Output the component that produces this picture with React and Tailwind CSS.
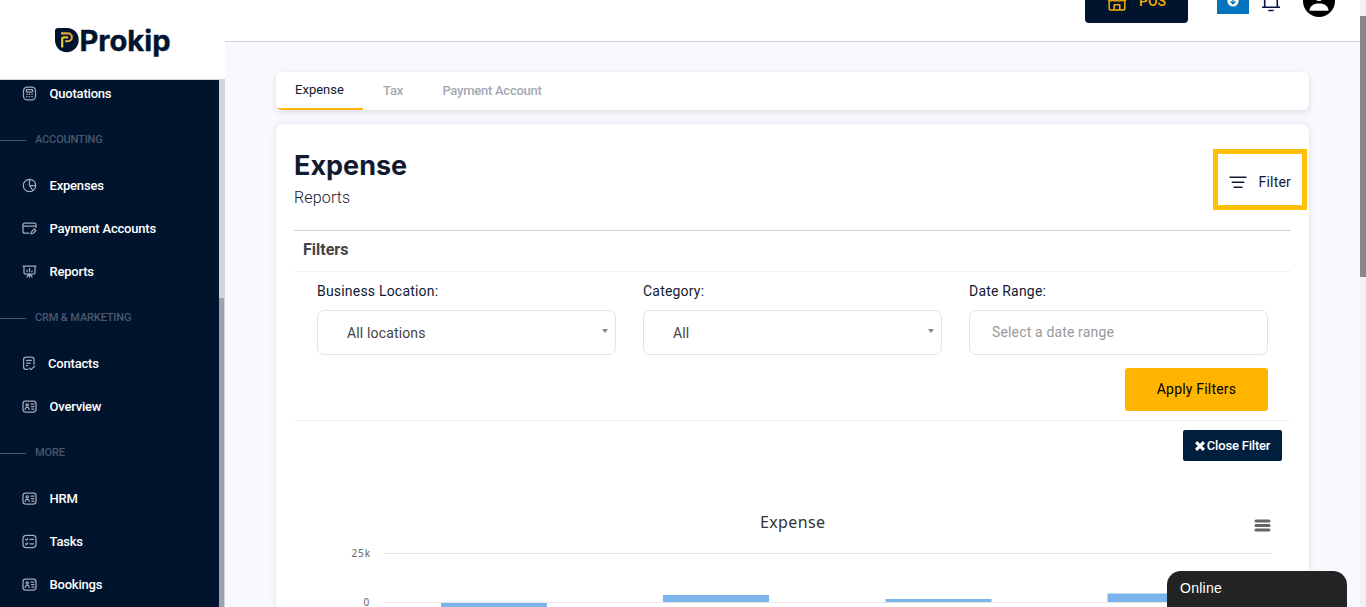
import { useState } from 'react';

const NavIcon = ({ name }) => (
  <svg
    className="h-[15px] w-[15px] shrink-0 text-[#a3a9b6]"
    viewBox="0 0 15 15"
    fill="none"
    stroke="currentColor"
    strokeWidth="1.25"
    strokeLinecap="round"
    strokeLinejoin="round"
  >
    {name === 'calculator' && (
      <>
        <rect x="1.5" y="1.2" width="12" height="12.6" rx="3.6" />
        <rect x="4.3" y="3.6" width="6.4" height="2.4" rx="0.8" />
        <path d="M4.8 8.3h.2M7.4 8.3h.2M10 8.3h.2M4.8 10.8h.2M7.4 10.8h.2M10 10.8h.2" strokeWidth="1.4" />
      </>
    )}
    {name === 'pie' && (
      <>
        <circle cx="7.5" cy="7.5" r="6.2" />
        <path d="M7.5 1.3v6.2h6.2M7.5 7.5l3.4 5" />
      </>
    )}
    {name === 'card' && (
      <>
        <path d="M6.8 12.2H2.4a1.4 1.4 0 0 1-1.4-1.4V3.6a1.4 1.4 0 0 1 1.4-1.4h10.2A1.4 1.4 0 0 1 14 3.6v2.8M1 5.2h13" />
        <path d="M9 12.9l.4-2 2.9-2.9 1.6 1.6-2.9 2.9z" />
      </>
    )}
    {name === 'board' && (
      <>
        <path d="M1 2h13M2 2v6.6a1.4 1.4 0 0 0 1.4 1.4h8.2A1.4 1.4 0 0 0 13 8.6V2" />
        <path d="M5 6v1.8M7.5 4.3v3.5M10 6.8v1M5 13l1.6-2.6M7.5 10.2V13M10 13l-1.6-2.6" />
      </>
    )}
    {name === 'note' && (
      <>
        <path d="M5.8 13.4H4a2.4 2.4 0 0 1-2.4-2.4V3.6A2.4 2.4 0 0 1 4 1.2h5.6A2.4 2.4 0 0 1 12 3.6v4.6" />
        <path d="M4.4 4.4h5M4.4 7h4M4.4 9.6h1.4M7.4 12.2l1.5 1.4 3.7-3.4" />
      </>
    )}
    {name === 'id' && (
      <>
        <rect x="1" y="2" width="13" height="11" rx="2.4" />
        <circle cx="5.2" cy="6" r="1.2" />
        <path d="M3.2 10.3c.2-1.4.9-2.1 2-2.1s1.8.7 2 2.1M9 5h3M9.4 7.5H12M9.8 10H12" />
      </>
    )}
    {name === 'tasks' && (
      <>
        <rect x="1" y="1.4" width="13" height="12.2" rx="3.4" />
        <path d="M3.6 5.4l.8.7 1.4-1.5M3.6 9.8l.8.7 1.4-1.5M8 5.4h3.4M8 9.8h3.4" />
      </>
    )}
  </svg>
);

const NavItem = ({ icon, label }) => (
  <a href="#" className="flex h-[43px] items-center pl-[22px] text-[13px] font-medium tracking-[-0.2px] text-white">
    <NavIcon name={icon} />
    <span className={label === 'Contacts' ? 'ml-[11px]' : 'ml-[12.5px]'}>{label}</span>
  </a>
);

const NavSection = ({ label }) => (
  <div className="flex h-[49px] items-center pt-px text-[11px] font-medium tracking-[-0.15px] text-[#4a586d]">
    <span className="h-px w-[26px] bg-[#4a586d]" />
    <span className="ml-[9px]">{label}</span>
  </div>
);

const Logo = () => (
  <svg width="118" height="34" viewBox="0 0 118 34">
    <defs>
      <linearGradient id="gold" gradientUnits="userSpaceOnUse" x1="7" y1="20" x2="19" y2="8">
        <stop offset="0" stopColor="#f5e13a" />
        <stop offset="1" stopColor="#dc8b2e" />
      </linearGradient>
    </defs>
    <path d="M4 3h9C20 3 24.700 8.300 24.700 15S19.500 27.200 12.700 27.200 1 22 1 15V6a3 3 0 0 1 3-3z" fill="#00142e" />
    <path
      d="M7 8.400h7a3.900 3.900 0 0 1 0 7.800h-2.800M8.200 22.500v-8.300a1.800 1.800 0 0 1 1.800-1.800h4.200"
      fill="none"
      stroke="url(#gold)"
      strokeWidth="2.1"
    />
    <text
      x="25.500"
      y="26"
      textLength="91"
      lengthAdjust="spacingAndGlyphs"
      fill="#00142e"
      stroke="#00142e"
      strokeWidth="0.4"
      className="font-['Inter',sans-serif] text-[28px] font-bold"
    >
      Prokip
    </text>
  </svg>
);

const Sidebar = () => (
  <aside className="flex w-[225px] shrink-0 flex-col bg-white">
    <div className="h-[80px] shrink-0 border-b border-[#d0d2d6] pt-[25px] pl-[54px]">
      <Logo />
    </div>
    <div className="flex min-h-0 flex-1">
      <nav className="w-[219px] overflow-hidden bg-[#00142e]">
        <div className="-mt-2">
          <NavItem icon="calculator" label="Quotations" />
          <NavSection label="ACCOUNTING" />
          <NavItem icon="pie" label="Expenses" />
          <NavItem icon="card" label="Payment Accounts" />
          <NavItem icon="board" label="Reports" />
          <NavSection label="CRM & MARKETING" />
          <NavItem icon="note" label="Contacts" />
          <NavItem icon="id" label="Overview" />
          <NavSection label="MORE" />
          <NavItem icon="id" label="HRM" />
          <NavItem icon="tasks" label="Tasks" />
          <NavItem icon="id" label="Bookings" />
        </div>
      </nav>
      <div className="w-[6px] bg-[#d1d5db] pt-[218px]">
        <div className="h-full w-[5px] bg-[#9ca3af]" />
      </div>
    </div>
  </aside>
);

const Header = () => (
  <header className="flex h-[42px] shrink-0 items-start justify-end overflow-hidden border-b border-[#cfd0d8] bg-white pr-[25px]">
    <button className="-mt-[20px] flex h-[43px] w-[103px] items-center rounded-[4px] bg-[#00142e] pl-[22px] text-[14px] font-medium text-[#f5ae06]">
      <svg width="20" height="20" viewBox="0 0 20 20" fill="none" stroke="currentColor" strokeWidth="1.5" strokeLinejoin="round">
        <path d="M2 3h16l1 4c0 2.6-4 2.6-4.5.2C14 9.600 10 9.600 10 7.200 10 9.600 6 9.600 5.500 7.200 5 9.600 1 9.600 1 7zM2.200 9.500v7.500a1 1 0 0 0 1 1h13.600a1 1 0 0 0 1-1V9.500M7.200 18v-5.200h5.600V18" />
      </svg>
      <span className="ml-3">POS</span>
    </button>
    <div className="ml-[29px] -mt-[18px] flex h-[32px] w-[32px] items-center justify-center bg-[#0474bc] text-[#0474bc]">
      <svg className="mt-[6px]" width="12" height="14" viewBox="0 0 12 14">
        <circle cx="6" cy="7" r="5.6" fill="#fff" />
        <path d="M6 3.500v6M3.500 7.200L6 9.800l2.500-2.600" fill="none" stroke="currentColor" strokeWidth="1.3" />
      </svg>
    </div>
    <svg className="ml-[12px] -mt-[12px]" width="20" height="24" viewBox="0 0 20 24" fill="none" stroke="#0b1145" strokeWidth="1.6">
      <path d="M1 19.200h18M3.700 19V9.500a6.300 6.300 0 0 1 12.600 0V19M7.300 22.500h5.400" />
    </svg>
    <svg className="ml-[22px] -mt-[15px]" width="32" height="32" viewBox="0 0 32 32">
      <circle cx="16" cy="16" r="16" fill="#000" />
      <circle cx="16" cy="11" r="5" fill="#fff" />
      <path d="M6.500 25.800c0-4.600 3.800-7.300 9.500-7.300s9.500 2.700 9.500 7.300z" fill="#fff" />
    </svg>
  </header>
);

const Tabs = () => {
  const [active, setActive] = useState('Expense');
  const tabs = [
    { name: 'Expense', width: 'w-[87px]' },
    { name: 'Tax', width: 'w-[60px]' },
    { name: 'Payment Account', width: 'w-[138px]' },
  ];

  return (
    <div className="flex h-[38px] shrink-0 overflow-hidden rounded-[6px] bg-white shadow-[0_2px_6px_rgba(20,20,60,0.12)]">
      {tabs.map((tab) => (
        <button
          key={tab.name}
          onClick={() => setActive(tab.name)}
          className={`${tab.width} text-[13px] ${
            active === tab.name
              ? 'border-b-2 border-[#ffb400] text-[#111a30]'
              : 'font-medium tracking-[-0.25px] text-[#a3a9b4]'
          }`}
        >
          {tab.name}
        </button>
      ))}
    </div>
  );
};

const Field = ({ label, value, placeholder }) => (
  <div className="w-[299px]">
    <label className="block h-[21px] text-[14px] leading-[21px] tracking-[0.2px] text-[#111a30]">{label}</label>
    <div className="mt-[8px] flex h-[45px] items-center justify-between rounded-[7px] border border-[#e4e4e8] pr-[7px] text-[14px] tracking-[0.15px]">
      {value ? (
        <>
          <span className="pt-[2px] pl-[29px] text-[#444]">{value}</span>
          <span className="-mt-[3px] border-x-[3.5px] border-t-[4.5px] border-x-transparent border-t-[#888]" />
        </>
      ) : (
        <span className="pl-[22px] text-[#999]">{placeholder}</span>
      )}
    </div>
  </div>
);

const Chart = () => (
  <svg
    className="mt-[39px] block shrink-0 font-['Noto_Sans','Open_Sans',sans-serif]"
    width="997"
    height="130"
    viewBox="294 500 997 130"
  >
    <text x="760" y="528" textLength="65" fontSize="16" fill="#333">Expense</text>
    <g stroke="#666" strokeWidth="3" strokeLinecap="round">
      <path d="M1256 521h13M1256 525.500h13M1256 530h13" />
    </g>
    <path d="M383 553.500h889M383 602.500h889" stroke="#e6e6e6" />
    <g fontSize="10" fill="#666">
      <text x="351.500" y="557" textLength="18.500">25k</text>
      <text x="363.500" y="606">0</text>
    </g>
    <g fill="#7cb5ec">
      <rect x="441" y="603" width="106" height="20" />
      <rect x="663" y="595" width="106" height="7" />
      <rect x="885.500" y="599" width="106" height="3" />
      <rect x="1107.500" y="593.500" width="106" height="8.500" />
    </g>
  </svg>
);

const ExpenseReport = () => (
  <section className="mt-[14px] flex h-[600px] shrink-0 flex-col rounded-[8px] bg-white px-[18px] shadow-[0_0_8px_rgba(20,20,60,0.09)]">
    <div className="relative flex h-[107px] shrink-0 justify-between border-b border-[#cfd0d8]">
      <div className="pt-[24px]">
        <h1 className="font-['Inter',sans-serif] text-[27px] leading-[36px] font-bold text-[#111a30]">Expense</h1>
        <p className="mt-[2px] text-[16px] leading-[24px] font-light tracking-[0.15px] text-[#111a30]">Reports</p>
      </div>
      <button className="mt-[44px] flex h-[28px] items-center text-[14px] tracking-[0.2px] text-[#111a30]">
        <svg width="18" height="14" viewBox="0 0 18 14" fill="none" stroke="currentColor" strokeWidth="1.5">
          <path d="M.5 2.200h17M2.700 7.200h12.600M4.500 12.200h9" />
        </svg>
        <span className="ml-[12px]">Filter</span>
      </button>
      {/* Highlight around the filter button */}
      <div className="absolute top-[25px] -right-[16px] h-[61px] w-[94px] border-[5px] border-[#ffc107]" />
    </div>

    <h2 className="h-[41px] shrink-0 border-b border-[#f2f2f3] pl-[9px] text-[16px] leading-[38px] font-bold text-[#444]">Filters</h2>

    <div className="h-[149px] shrink-0 border-b border-[#f2f2f3] pt-[9px] pr-[23px] pl-[23px]">
      <div className="flex justify-between">
        <Field label="Business Location:" value="All locations" />
        <Field label="Category:" value="All" />
        <Field label="Date Range:" placeholder="Select a date range" />
      </div>
      <div className="mt-[13px] flex justify-end">
        <button className="h-[43px] w-[143px] rounded-[3px] bg-[#ffb400] text-[14px] tracking-[0.2px] text-black">
          Apply Filters
        </button>
      </div>
    </div>

    <div className="mt-[9px] flex shrink-0 justify-end pr-[9px]">
      <button className="flex h-[31px] w-[99px] items-center justify-center rounded-[2px] bg-[#001f3f] text-[13px] font-medium tracking-[-0.2px] text-white">
        <svg className="mr-[2px]" width="10" height="10" viewBox="0 0 10 10" stroke="currentColor" strokeWidth="3">
          <path d="M1.100 1.100l7.800 7.800M8.900 1.100L1.100 8.900" />
        </svg>
        Close Filter
      </button>
    </div>

    <Chart />
  </section>
);

function App() {
  return (
    <div className="relative flex h-[607px] w-[1366px] overflow-hidden bg-[#f8f9fe] font-['Roboto',sans-serif]">
      <Sidebar />
      <main className="flex w-[1135px] shrink-0 flex-col overflow-hidden">
        <Header />
        <div className="flex min-h-0 flex-1 flex-col pt-[30px] pr-[51px] pl-[51px]">
          <Tabs />
          <ExpenseReport />
        </div>
      </main>

      {/* Page scrollbar */}
      <div className="w-[6px] shrink-0 bg-[#f1f1f1] pt-[16px]">
        <div className="h-[261px] bg-[#888]" />
      </div>

      {/* Chat widget */}
      <div className="absolute right-[19px] bottom-0 h-[36px] w-[180px] rounded-t-[14px] bg-[#222423] pl-[13px] font-['Liberation_Sans',Arial,sans-serif] text-[14px] leading-[34px] font-normal tracking-[0.25px] text-white">
        Online
      </div>
    </div>
  );
}

export default App;
